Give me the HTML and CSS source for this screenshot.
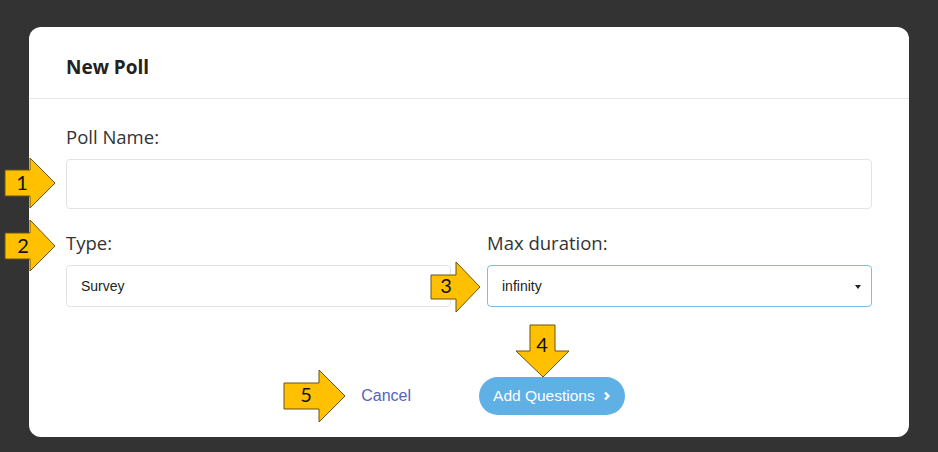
FILE: index.html
```html
<!DOCTYPE html>
<html>
<head>
<meta charset="utf-8">
<link rel="stylesheet" href="styles.css">
</head>
<body>
<div class="card">
  <div class="card-header"><h2 class="title">New Poll</h2></div>
  <div class="card-body">
    <label class="label">Poll Name:</label>
    <div class="input input-lg"></div>
    <div class="row">
      <div class="col">
        <label class="label">Type:</label>
        <div class="input">Survey</div>
      </div>
      <div class="col">
        <label class="label">Max duration:</label>
        <div class="input select">infinity<span class="caret"></span></div>
      </div>
    </div>
    <div class="actions">
      <span class="cancel">Cancel</span>
      <span class="btn">Add Questions <svg class="chev" width="8" height="10" viewBox="0 0 8 10"><path d="M2 1.5 L5.5 5 L2 8.5" fill="none" stroke="#fff" stroke-width="2.4"/></svg></span>
    </div>
  </div>
</div>
<svg class="overlay" width="938" height="452" viewBox="0 0 938 452">
  <g class="arrow">
    <polygon points="5,170 30,170 30,158 55,183 30,208 30,196 5,196"/>
    <polygon points="5,233 30,233 30,220 55,246 30,271 30,259 5,259"/>
    <polygon points="431,275 456,275 456,262 480,287 456,312 456,299 431,299"/>
    <polygon points="530,325 555,325 555,351 569,351 543,377 516,351 530,351"/>
    <polygon points="284,383 319,383 319,370 345,396 319,422 319,409 284,409"/>
  </g>
  <g class="num">
    <text x="22" y="190">1</text>
    <text x="23" y="253">2</text>
    <text x="446" y="293">3</text>
    <text x="542" y="352">4</text>
    <text x="306" y="402">5</text>
  </g>
</svg>
</body>
</html>
```
FILE: styles.css
```css
html, body {
  margin: 0;
  padding: 0;
}
body {
  background: #333333;
  width: 938px;
  height: 452px;
  overflow: hidden;
  padding: 27px 29px 0 29px;
  box-sizing: border-box;
  font-family: "Open Sans", "Noto Sans", sans-serif;
  color: #333;
}
.card {
  width: 880px;
  height: 410px;
  background: #fff;
  border-radius: 12px;
  overflow: hidden;
}
.card-header {
  height: 72px;
  border-bottom: 1px solid #e6e6e6;
  box-sizing: border-box;
  padding: 8px 37px 0 37px;
  display: flex;
  align-items: center;
}
.title {
  margin: 0;
  font-size: 19px;
  font-weight: 700;
  color: #222;
}
.card-body {
  padding: 25px 37px 0 37px;
}
.label {
  display: block;
  font-size: 18.5px;
  line-height: 26px;
  margin-bottom: 9px;
  color: #333;
}
.input {
  height: 42px;
  box-sizing: border-box;
  border: 1px solid #e3e3e3;
  border-radius: 4px;
  padding: 0 14px;
  display: flex;
  align-items: center;
  font-family: "Liberation Sans", Arial, sans-serif;
  font-size: 14px;
  color: #222;
}
.input-lg {
  height: 50px;
  margin-bottom: 21px;
}
.row {
  display: flex;
  gap: 36px;
}
.col {
  flex: 1;
}
.select {
  border-color: #6fc2ea;
  position: relative;
}
.caret {
  position: absolute;
  right: 10px;
  top: 19px;
  width: 0;
  height: 0;
  border-left: 3px solid transparent;
  border-right: 3px solid transparent;
  border-top: 4px solid #222;
}
.actions {
  display: flex;
  justify-content: center;
  align-items: center;
  gap: 68px;
  margin-top: 70px;
  padding-left: 48px;
}
.cancel {
  font-family: "Liberation Sans", Arial, sans-serif;
  font-size: 16px;
  color: #5563c1;
}
.btn {
  height: 38px;
  padding: 0 14px;
  border-radius: 19px;
  background: #5eb0e5;
  color: #fff;
  display: flex;
  align-items: center;
  gap: 8px;
  font-family: "Liberation Sans", Arial, sans-serif;
  font-size: 15.5px;
}
.overlay {
  position: absolute;
  left: 0;
  top: 0;
  pointer-events: none;
}
.arrow polygon {
  fill: #ffc000;
  stroke: #6b5410;
  stroke-width: 1;
}
.num text {
  font-family: "Lato", "Open Sans", sans-serif;
  font-size: 20px;
  fill: #111;
  text-anchor: middle;
}
```
